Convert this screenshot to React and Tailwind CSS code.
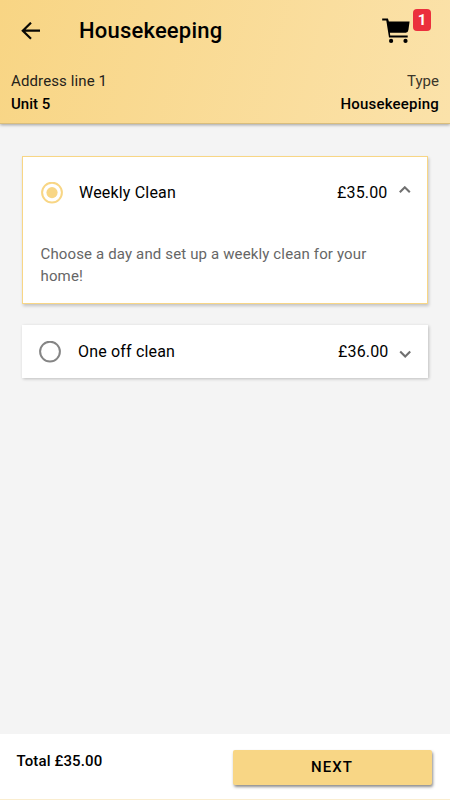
function BackArrow() {
  return (
    <svg className="block h-[18px] w-[20px]" viewBox="0 0 20 18" fill="none" stroke="#090905" strokeWidth="2.2">
      <path d="M19 8.7H2M10 .7 1.8 8.7l8.2 8" />
    </svg>
  );
}

function Cart() {
  return (
    <svg className="block h-[26px] w-[28px]" viewBox="0 0 28 26" fill="#000">
      <path d="M.2 .4h5.7l1 3.2h20.7l-1.2 8.4q-.4 2.8-2.6 2.8H7.9l.3 2.8h17.5v2H7L4.3 2.4H.2z" />
      <circle cx="9.1" cy="22.9" r="2.1" />
      <circle cx="23.5" cy="22.9" r="2.1" />
    </svg>
  );
}

function Radio({ checked }) {
  return (
    <svg className="block h-[22px] w-[22px]" viewBox="0 0 22 22" fill="none">
      <circle cx="11" cy="10.6" r="9.9" stroke={checked ? "#f8d685" : "#858585"} strokeWidth="2" />
      {checked && <circle cx="11" cy="10.6" r="5.6" fill="#f8d685" />}
    </svg>
  );
}

function Chevron({ up }) {
  return (
    <svg className="block h-2 w-3" viewBox="0 0 12 8" fill="none" stroke="#707070" strokeWidth="2.1">
      <path d={up ? "M.8 6.3 5.8 1.3l5 5" : "M1.2 1.5l5 5 5-5"} />
    </svg>
  );
}

export default function App() {
  return (
    <div className="flex h-[800px] w-[450px] flex-col overflow-hidden bg-[#f4f4f4] font-['Roboto',sans-serif] text-black">
      <header className="h-[124px] shrink-0 border-b border-[#d9bd7c] bg-linear-[105deg] from-[#f8d584] to-[#fbe2aa] shadow-[0_1px_3px_rgba(0,0,0,0.35)]">
        <div className="flex h-[62px] items-start pr-[19px] pl-[21px]">
          <div className="pt-[22px]"><BackArrow /></div>
          <h1 className="ml-[38px] pt-[15px] text-[22px] leading-8 font-medium tracking-[0.2px]">Housekeeping</h1>
          <div className="ml-auto flex items-start">
            <div className="pt-[18px]"><Cart /></div>
            <span className="mt-[9px] ml-[3px] flex h-[22px] w-[18px] items-center justify-center rounded bg-[#eb303d] text-[15px] leading-none font-bold text-white">1</span>
          </div>
        </div>
        <div className="flex justify-between px-[11px] pt-[8px] text-[15px] leading-[23px]">
          <div>
            <p className="tracking-[0.12px] text-[#25221a]">Address line 1</p>
            <p className="font-medium">Unit 5</p>
          </div>
          <div className="text-right">
            <p className="text-[#3b362a]">Type</p>
            <p className="font-medium tracking-[0.2px]">Housekeeping</p>
          </div>
        </div>
      </header>

      <main className="flex-1 px-[22px] pt-8">
        <section className="h-[148px] border border-[#f8d685] bg-white shadow-[1px_2px_3px_rgba(0,0,0,0.2)]">
          <div className="flex h-[72px] items-center pr-[16px] pl-[17.5px]">
            <Radio checked />
            <span className="ml-[16.5px] text-[16px] tracking-[0.18px]">Weekly Clean</span>
            <span className="ml-auto text-[16px] tracking-[0.15px]">£35.00</span>
            <span className="mb-[7px] ml-[11.5px]"><Chevron up /></span>
          </div>
          <p className="pt-[14px] pl-[17.5px] text-[15px] leading-[22px] tracking-[0.14px] text-[#666]">
            Choose a day and set up a weekly clean for your<br />home!
          </p>
        </section>
        <section className="mt-[21px] flex h-[53px] items-center bg-white pr-[17px] pl-[17px] shadow-[1px_1px_3px_rgba(0,0,0,0.22)]">
          <Radio />
          <span className="ml-[17px] text-[16px] tracking-[0.17px]">One off clean</span>
          <span className="ml-auto text-[16px] tracking-[0.15px]">£36.00</span>
          <span className="mt-[5px] ml-[10.5px]"><Chevron /></span>
        </section>
      </main>

      <footer className="flex h-[66px] shrink-0 items-start justify-between border-b border-[#faedcf] bg-white pr-[18px] pl-[16.5px]">
        <p className="pt-[16px] text-[15px] leading-[22px] font-medium tracking-[0.12px]">Total £35.00</p>
        <button className="mt-4 h-[35px] w-[199px] rounded-[2px] bg-[#f8d685] pr-px text-[15px] font-medium tracking-[1.1px] shadow-[1px_2px_3px_rgba(0,0,0,0.45)]">NEXT</button>
      </footer>
    </div>
  );
}
